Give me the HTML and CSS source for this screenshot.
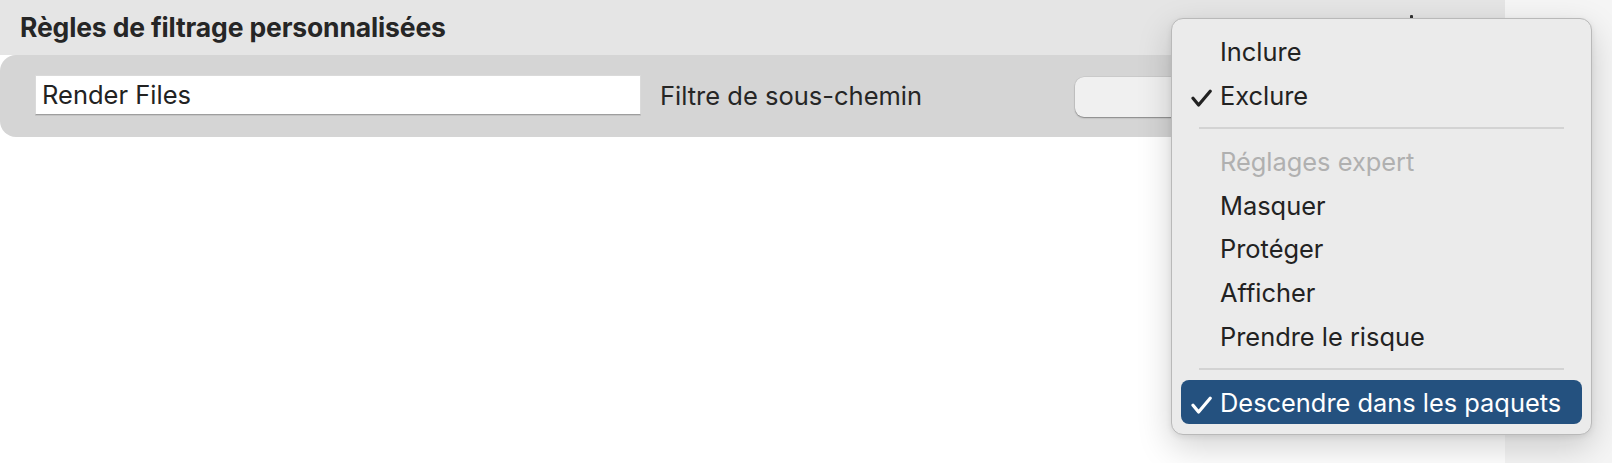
FILE: index.html
```html
<!DOCTYPE html>
<html lang="fr">
<head>
<meta charset="utf-8">
<title>Règles de filtrage</title>
<link rel="stylesheet" href="styles.css">
</head>
<body>
<div class="window">
  <div class="main">
    <header class="section-head">
      <h2 class="section-title">Règles de filtrage personnalisées</h2>
      <span class="head-icon"></span>
    </header>
    <div class="rule-row">
      <div class="name-field">Render Files</div>
      <span class="rule-label">Filtre de sous-chemin</span>
      <div class="popup-btn"></div>
    </div>
    <div class="list-area"></div>
  </div>
  <div class="side"></div>
</div>

<div class="menu">
  <div class="menu-item"><span class="check"></span><span class="item-text">Inclure</span></div>
  <div class="menu-item"><span class="check"><svg viewBox="0 0 21 18" width="21" height="18"><path d="M2 9.2 L7.6 16 L19.2 2.2" /></svg></span><span class="item-text">Exclure</span></div>
  <div class="menu-sep"></div>
  <div class="menu-item disabled"><span class="check"></span><span class="item-text">Réglages expert</span></div>
  <div class="menu-item"><span class="check"></span><span class="item-text">Masquer</span></div>
  <div class="menu-item"><span class="check"></span><span class="item-text">Protéger</span></div>
  <div class="menu-item"><span class="check"></span><span class="item-text">Afficher</span></div>
  <div class="menu-item"><span class="check"></span><span class="item-text">Prendre le risque</span></div>
  <div class="menu-sep"></div>
  <div class="menu-item selected"><span class="check"><svg viewBox="0 0 21 18" width="21" height="18"><path d="M2 9.2 L7.6 16 L19.2 2.2" /></svg></span><span class="item-text">Descendre dans les paquets</span></div>
</div>
</body>
</html>
```

FILE: styles.css
```css
* { box-sizing: border-box; }

html, body {
  margin: 0;
  padding: 0;
  width: 1612px;
  height: 463px;
  overflow: hidden;
  font-family: "Inter", "Noto Sans", sans-serif;
  color: #262626;
}

.window {
  display: flex;
  width: 1612px;
  height: 463px;
  background: #ffffff;
}

.main {
  width: 1505px;
  display: flex;
  flex-direction: column;
  background: #ffffff;
}

.side {
  flex: 1;
  background: #f5f5f5;
}

.section-head {
  height: 55px;
  background: #e5e5e5;
  display: flex;
  align-items: flex-start;
  padding-left: 20px;
}

.section-title {
  margin: 0;
  padding-top: 12px;
  font-size: 26.5px;
  line-height: 30px;
  font-weight: 700;
  color: #262626;
  letter-spacing: -0.15px;
}

.head-icon {
  margin-left: auto;
  margin-right: 92px;
  margin-top: 15px;
  width: 3px;
  height: 4px;
  border-radius: 1px;
  background: #333;
}

.rule-row {
  height: 82px;
  background: #d5d5d5;
  border-radius: 16px;
  display: flex;
  align-items: center;
  padding-left: 35px;
}

.name-field {
  width: 606px;
  height: 40px;
  background: #ffffff;
  border-top: 1px solid #dadada;
  border-left: 1px solid #dadada;
  border-right: 1px solid #dadada;
  border-bottom: 1px solid #9e9e9e;
  box-shadow: 0 1px 0 rgba(0,0,0,0.08);
  padding-left: 6px;
  font-size: 25.5px;
  line-height: 38px;
  margin-top: -2px;
  color: #222222;
}

.rule-label {
  margin-left: 19px;
  width: 415px;
  font-size: 25.5px;
  line-height: 30px;
  color: #262626;
}

.popup-btn {
  width: 320px;
  height: 40px;
  margin-top: 2px;
  border-radius: 9px;
  background: #f0f0f0;
  box-shadow: 0 1px 1.5px rgba(0,0,0,0.35), 0 0 0 0.5px rgba(0,0,0,0.08);
}

.list-area {
  flex: 1;
  background: #ffffff;
}

/* Popup menu */
.menu {
  position: absolute;
  left: 1171px;
  top: 18px;
  width: 421px;
  height: 417px;
  background: #ebebeb;
  border: 1px solid #b9b9b9;
  border-radius: 12px;
  box-shadow: 0 12px 34px rgba(0,0,0,0.18), 0 2px 6px rgba(0,0,0,0.08);
  padding: 10px 9px;
  display: flex;
  flex-direction: column;
}

.menu-item {
  height: 44px;
  display: flex;
  align-items: center;
  border-radius: 8px;
  font-size: 25.4px;
  line-height: 30px;
  color: #222222;
}

.check {
  align-self: stretch;
  width: 39px;
  padding-left: 10px;
  padding-top: 16px;
  display: flex;
  align-items: flex-start;
}

.check svg path {
  fill: none;
  stroke: #222222;
  stroke-width: 3.2;
  stroke-linecap: round;
  stroke-linejoin: round;
}

.item-text {
  padding-top: 2px;
}

.menu-item.disabled {
  color: #b0b0b0;
}

.menu-item.selected {
  background: #24517f;
  color: #ffffff;
}

.menu-item.selected .check svg path {
  stroke: #ffffff;
}

.menu-sep {
  height: 22px;
  display: flex;
  align-items: center;
  padding: 0 18px;
}

.menu-sep::before {
  content: "";
  flex: 1;
  height: 2px;
  background: #d3d3d3;
}
```
